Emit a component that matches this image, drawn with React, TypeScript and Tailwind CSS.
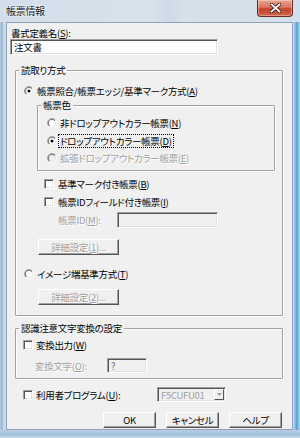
import React from 'react';

const dis = 'text-[#a0a0a0] [text-shadow:1px_1px_0_#fff]';

const Radio = ({ checked = false, disabled = false }: { checked?: boolean; disabled?: boolean }) => (
  <svg width="10" height="10" viewBox="0 0 12 12" className="shrink-0">
    <defs>
      <linearGradient id="ro" x1="0" y1="0" x2="1" y2="1">
        <stop offset="0.5" stopColor="#a0a0a0" />
        <stop offset="0.5" stopColor="#ffffff" />
      </linearGradient>
      <linearGradient id="ri" x1="0" y1="0" x2="1" y2="1">
        <stop offset="0.5" stopColor="#555555" />
        <stop offset="0.5" stopColor="#e3e3e3" />
      </linearGradient>
    </defs>
    <circle cx="6" cy="6" r="5.5" fill="none" stroke="url(#ro)" strokeWidth="1" />
    <circle cx="6" cy="6" r="4.5" fill={disabled ? '#f0f0f0' : '#ffffff'} stroke="url(#ri)" strokeWidth="1" />
    {checked && <circle cx="6" cy="6" r="1.8" fill="#000" />}
  </svg>
);

const Check = () => (
  <div className="w-[10px] h-[10px] shrink-0 bg-white border border-t-[#a0a0a0] border-l-[#a0a0a0] border-b-white border-r-white shadow-[inset_1px_1px_0_#555,inset_-1px_-1px_0_#e3e3e3]" />
);

const Sunken = ({ className = '', children }: { className?: string; children?: React.ReactNode }) => (
  <div
    className={`border border-t-[#a0a0a0] border-l-[#a0a0a0] border-b-white border-r-white shadow-[inset_1px_1px_0_#555,inset_-1px_-1px_0_#e3e3e3] flex items-center ${className}`}
  >
    {children}
  </div>
);

const Btn = ({ className = '', disabled = false, children }: { className?: string; disabled?: boolean; children: React.ReactNode }) => (
  <div
    className={`h-[16px] bg-[#f0f0f0] border border-t-white border-l-white border-b-[#555] border-r-[#555] shadow-[inset_-1px_-1px_0_#a0a0a0] flex items-center justify-center leading-[12px] ${disabled ? dis : 'text-black'} ${className}`}
  >
    {children}
  </div>
);

const Legend = ({ children, className = '' }: { children: React.ReactNode; className?: string }) => (
  <legend className={`px-[2px] leading-[12px] ${className}`}>{children}</legend>
);

const box =
  'border border-[#a0a0a0] shadow-[inset_1px_1px_0_#fff,1px_1px_0_#fff] rounded-[1px] p-0 m-0 min-w-0';

export default function App() {
  return (
    <div className="w-[300px] h-[438px] overflow-hidden flex flex-col bg-[linear-gradient(180deg,#d3dfea_0%,#c9d8e6_40%,#b9cde0_100%)] font-['Noto_Sans_CJK_JP',sans-serif] text-[9.5px] tracking-[-0.3px] text-black [font-feature-settings:'palt']">
      {/* title bar */}
      <div className="h-[22px] flex items-start relative bg-[linear-gradient(90deg,#d2deea_0%,#d8e2ec_50%,#d0d9e6_56%,#d6e2ea_62%,#d2dfea_100%)]">
        <div className="ml-[6px] mt-[5px] leading-[12px] text-[10px] text-[#1a1a1a] [text-shadow:0_0_4px_#fff,0_0_2px_#fff]">帳票情報</div>
        <div className="ml-auto mr-[7px] w-[36px] h-[17px] rounded-b-[4px] border border-t-0 border-[#6a2a20] bg-[linear-gradient(180deg,#e8a692_0%,#d8765e_45%,#c2432a_55%,#d0644c_100%)] shadow-[inset_0_0_0_1px_rgba(255,255,255,0.35)] flex items-center justify-center">
          <svg width="11" height="10" viewBox="0 0 11 10">
            <path d="M1.5 1.5 L9.5 8.5 M9.5 1.5 L1.5 8.5" stroke="#3b1510" strokeWidth="3.6" strokeLinecap="square" />
            <path d="M1.5 1.5 L9.5 8.5 M9.5 1.5 L1.5 8.5" stroke="#ffffff" strokeWidth="1.8" strokeLinecap="square" />
          </svg>
        </div>
      </div>

      {/* body with side frames */}
      <div className="flex flex-1">
        <div className="w-[6px] bg-[linear-gradient(90deg,#c4d3e1_0%,#8fb2d4_30%,#c8d7e5_60%,#d2dee9_100%)]" />
        <div className="w-[287px] h-[408px] bg-[#f0f0f0] border border-[#8ea3b8] flex flex-col">
          <div className="ml-[4px] mt-[4px] leading-[12px]">
            書式定義名(<u>S</u>):
          </div>
          <Sunken className="ml-[3px] w-[208px] h-[16px] bg-white pl-[3px] leading-[12px]">注文書</Sunken>

          {/* 読取り方式 */}
          <fieldset className={`${box} ml-[8px] mt-[9px] w-[268px] h-[252px] flex flex-col`}>
            <Legend className="ml-[3px]">読取り方式</Legend>
            <div className="ml-[8px] mt-[9px] flex items-center gap-[3px] leading-[12px]">
              <Radio checked />
              <span>帳票照合/帳票エッジ/基準マーク方式(<u>A</u>)</span>
            </div>

            <fieldset className={`${box} ml-[21px] mt-[2px] w-[238px] h-[72px] flex flex-col`}>
              <Legend className="ml-[3px]">帳票色</Legend>
              <div className="ml-[9px] mt-[6px] flex items-center gap-[3px] leading-[12px]">
                <Radio />
                <span>非ドロップアウトカラー帳票(<u>N</u>)</span>
              </div>
              <div className="ml-[9px] mt-[6px] flex items-center gap-[2px] leading-[12px]">
                <Radio checked />
                <span className="outline outline-1 outline-dotted outline-black px-[1px]">ドロップアウトカラー帳票(<u>D</u>)</span>
              </div>
              <div className="ml-[9px] mt-[5px] flex items-center gap-[3px] leading-[12px]">
                <Radio disabled />
                <span className={dis}>拡張ドロップアウトカラー帳票(<u>E</u>)</span>
              </div>
            </fieldset>

            <div className="ml-[28px] mt-[7px] flex items-center gap-[4px] leading-[12px]">
              <Check />
              <span>基準マーク付き帳票(<u>B</u>)</span>
            </div>
            <div className="ml-[28px] mt-[6px] flex items-center gap-[4px] leading-[12px]">
              <Check />
              <span>帳票IDフィールド付き帳票(<u>I</u>)</span>
            </div>
            <div className="ml-[42px] mt-[4px] flex items-center leading-[12px]">
              <span className={`${dis} w-[59px]`}>帳票ID(<u>M</u>):</span>
              <Sunken className="w-[101px] h-[16px] bg-[#f0f0f0]" />
            </div>
            <Btn disabled className="ml-[22px] mt-[11px] w-[81px]">詳細設定(<u>1</u>)...</Btn>

            <div className="ml-[8px] mt-[13px] flex items-center gap-[3px] leading-[12px]">
              <Radio />
              <span>イメージ端基準方式(<u>T</u>)</span>
            </div>
            <Btn disabled className="ml-[22px] mt-[9px] w-[81px]">詳細設定(<u>2</u>)...</Btn>
          </fieldset>

          {/* 認識注意文字変換の設定 */}
          <fieldset className={`${box} ml-[8px] mt-[6px] w-[268px] h-[57px] flex flex-col`}>
            <Legend className="ml-[3px]">認識注意文字変換の設定</Legend>
            <div className="ml-[7px] mt-[5px] flex items-center gap-[3px] leading-[12px]">
              <Check />
              <span>変換出力(<u>W</u>)</span>
            </div>
            <div className="ml-[19px] mt-[7px] flex items-center leading-[12px]">
              <span className={`${dis} w-[72px]`}>変換文字(<u>O</u>):</span>
              <Sunken className="w-[40px] h-[15px] bg-[#f0f0f0] pl-[3px] text-[#6d6d6d]">?</Sunken>
            </div>
          </fieldset>

          <div className="ml-[16px] mt-[8px] flex items-center leading-[12px]">
            <Check />
            <span className="ml-[3px] w-[121px]">利用者プログラム(<u>U</u>):</span>
            <Sunken className="w-[69px] h-[15px] bg-[#f0f0f0] pl-[3px] pr-[1px] justify-between">
              <span className="text-[#a0a0a0]">F5CUFU01</span>
              <div className="w-[10px] h-[11px] bg-[#f0f0f0] border border-t-white border-l-white border-b-[#555] border-r-[#555] flex items-center justify-center">
                <svg width="5" height="3" viewBox="0 0 5 3">
                  <path d="M0 0 H5 L2.5 3 Z" fill="#a0a0a0" />
                </svg>
              </div>
            </Sunken>
          </div>

          <div className="ml-[96px] mt-[10px] flex gap-[10px]">
            <Btn className="w-[53px] h-[15px]">OK</Btn>
            <Btn className="w-[53px] h-[15px]">キャンセル</Btn>
            <Btn className="w-[53px] h-[15px]">ヘルプ</Btn>
          </div>
        </div>
        <div className="w-[7px] bg-[linear-gradient(90deg,#d3dfea_0%,#7fb6dc_35%,#4aa6d6_55%,#c2d6e6_100%)]" />
      </div>
      <div className="h-[8px] bg-[linear-gradient(180deg,#b9cfe2_0%,#9fc0dc_60%,#c8dae9_100%)]" />
    </div>
  );
}
